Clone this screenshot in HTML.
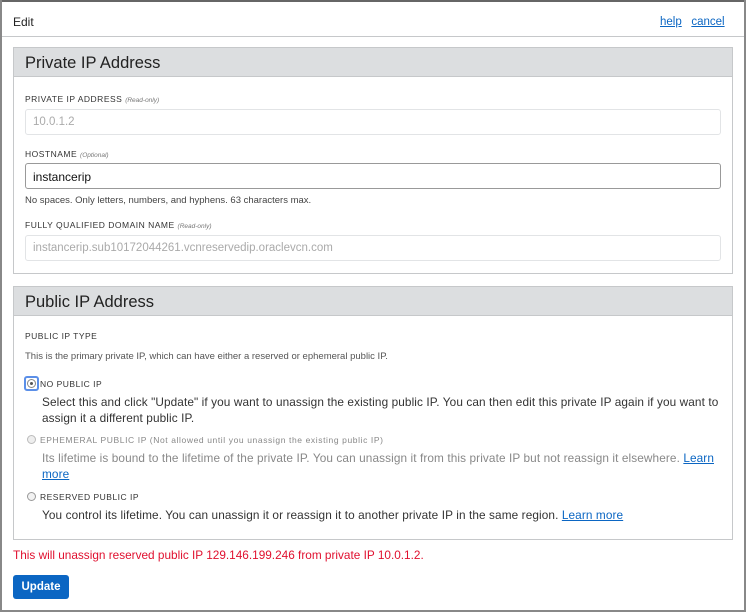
<!DOCTYPE html>
<html><head><style>
body{margin:0;width:746px;height:612px;overflow:hidden;background:#fff;font-family:"Liberation Sans",sans-serif;position:relative}
.a{position:absolute;white-space:nowrap}
.lbl{font-size:8.5px;letter-spacing:.5px;color:#333}
.lbl i{font-size:6.5px;color:#777;letter-spacing:0}
.inp{position:absolute;left:25px;width:696px;height:26px;border:1px solid #e2e4e6;border-radius:3px;box-sizing:border-box;font-size:11.5px;color:#aaa;padding:6px 7px}
.panel{position:absolute;left:13px;width:720px;border:1px solid #c6c8ca;box-sizing:border-box}
.ph{height:29px;background:#dcdee0;border-bottom:1px solid #c6c8ca;font-size:16.5px;color:#222;padding:6px 11px;box-sizing:border-box}
.t{font-size:11.8px;color:#333;letter-spacing:.1px}
a{color:#0b66c3;text-decoration:underline}
.r{position:absolute;width:9px;height:9px;border-radius:50%;border:1px solid #bbb;background:#eee;box-sizing:border-box}
</style></head><body>
<div class="a" style="left:0;top:0;width:746px;height:2px;background:#666"></div>
<div class="a" style="left:0;top:0;width:2px;height:612px;background:#888"></div>
<div class="a" style="left:744px;top:0;width:2px;height:612px;background:#888"></div>
<div class="a" style="left:0;top:610px;width:746px;height:2px;background:#888"></div>
<div class="a" style="left:13px;top:15px;font-size:12px;color:#222">Edit</div>
<div class="a" style="left:660px;top:16px;font-size:11.5px"><a>help</a>&nbsp;&nbsp;&nbsp;<a>cancel</a></div>
<div class="a" style="left:2px;top:36px;width:742px;height:1px;background:#c6c8ca"></div>

<div class="panel" style="top:47px;height:227px"><div class="ph">Private IP Address</div></div>
<div class="a lbl" style="left:25px;top:94px">PRIVATE IP ADDRESS <i>(Read-only)</i></div>
<div class="inp" style="top:109px">10.0.1.2</div>
<div class="a lbl" style="left:25px;top:149px">HOSTNAME <i>(Optional)</i></div>
<div class="inp" style="top:163px;border-color:#999;color:#111;font-size:12px">instancerip</div>
<div class="a" style="left:25px;top:195px;font-size:9.5px;color:#444">No spaces. Only letters, numbers, and hyphens. 63 characters max.</div>
<div class="a lbl" style="left:25px;top:220px">FULLY QUALIFIED DOMAIN NAME <i>(Read-only)</i></div>
<div class="inp" style="top:235px">instancerip.sub10172044261.vcnreservedip.oraclevcn.com</div>

<div class="panel" style="top:286px;height:254px"><div class="ph">Public IP Address</div></div>
<div class="a lbl" style="left:25px;top:331px">PUBLIC IP TYPE</div>
<div class="a" style="left:25px;top:351px;font-size:9.5px;color:#555">This is the primary private IP, which can have either a reserved or ephemeral public IP.</div>
<div class="a" style="left:24px;top:376px;width:15px;height:15px;border:2px solid #5b8fe8;border-radius:3px;box-sizing:border-box"></div>
<div class="r" style="left:27px;top:379px;background:#fff;border-color:#888"></div>
<div class="a" style="left:30px;top:382px;width:3px;height:3px;border-radius:50%;background:#555"></div>
<div class="a lbl" style="left:40px;top:379px">NO PUBLIC IP</div>
<div class="a t" style="left:42px;top:395px;line-height:15.5px;white-space:normal;width:685px">Select this and click "Update" if you want to unassign the existing public IP. You can then edit this private IP again if you want to assign it a different public IP.</div>
<div class="r" style="left:27px;top:435px"></div>
<div class="a lbl" style="left:40px;top:435px;color:#888;letter-spacing:.6px">EPHEMERAL PUBLIC IP (Not allowed until you unassign the existing public IP)</div>
<div class="a t" style="left:42px;top:451px;line-height:15.5px;white-space:normal;width:685px;color:#888">Its lifetime is bound to the lifetime of the private IP. You can unassign it from this private IP but not reassign it elsewhere. <a>Learn more</a></div>
<div class="r" style="left:27px;top:492px;background:#f2f2f2;border-color:#999"></div>
<div class="a lbl" style="left:40px;top:492px">RESERVED PUBLIC IP</div>
<div class="a t" style="left:42px;top:508px">You control its lifetime. You can unassign it or reassign it to another private IP in the same region. <a>Learn more</a></div>

<div class="a" style="left:13px;top:548px;font-size:11.8px;color:#e0102f">This will unassign reserved public IP 129.146.199.246 from private IP 10.0.1.2.</div>
<div class="a" style="left:13px;top:575px;width:56px;height:24px;background:#0b66c3;border-radius:3px;color:#fff;font-size:11.5px;font-weight:bold;text-align:center;line-height:24px">Update</div>
</body></html>
